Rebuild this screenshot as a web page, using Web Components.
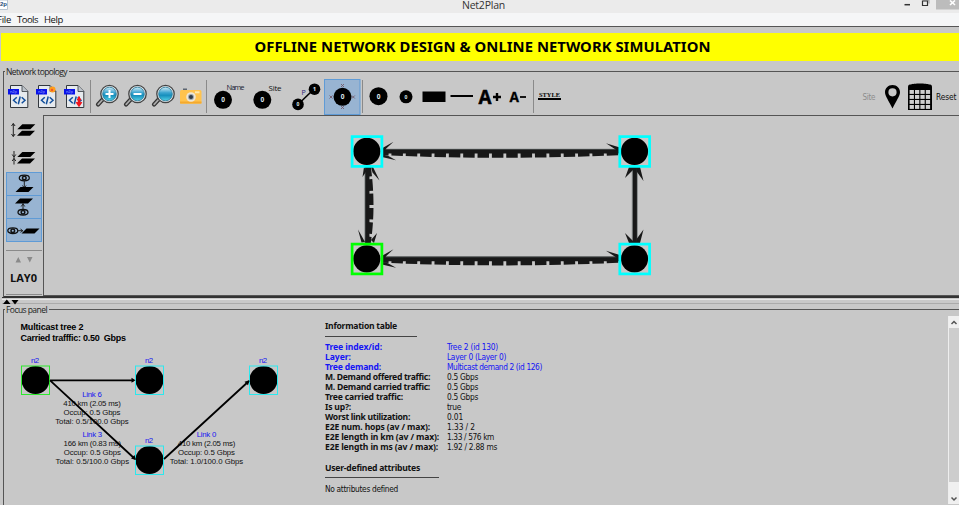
<!DOCTYPE html>
<html lang="en"><head><meta charset="utf-8"><title>Net2Plan</title>
<style>
html,body{margin:0;width:959px;height:505px;overflow:hidden;background:#c8c8c8}
</style></head><body>
<net-app></net-app>
<script>
const TAHOMA = '"DejaVu Sans Condensed","DejaVu Sans",sans-serif';
const SEGOE = '"Open Sans","Noto Sans",sans-serif';
const define = (name, html, init) => customElements.define(name, class extends HTMLElement {
  connectedCallback() {
    if (this.shadowRoot) return;
    const root = this.attachShadow({mode: 'open'});
    const t = document.createElement('template');
    t.innerHTML = typeof html === 'function' ? html(this) : html;
    root.append(t.content.cloneNode(true));
    if (init) init(this, root);
  }
});
// Text whose tracking is adjusted so that it spans the width given in "w".
define('fit-text', '<style>:host{display:block;white-space:pre;flex:none}</style><span><slot></slot></span>', (el, root) => {
  const w = +el.getAttribute('w');
  if (!w) return;
  el.style.width = w + 'px';
  const span = root.querySelector('span');
  const nat = span.getBoundingClientRect().width;
  span.style.letterSpacing = ((w - nat) / el.textContent.length) + 'px';
});
define('title-bar', `<style>
:host{display:flex;height:13px;background:#ebebeb;font:10.500px/10px ${SEGOE};color:#333;overflow:hidden;flex:none}
.mid{width:453px;flex:none}
svg{display:block;margin-left:auto}
</style><svg width="9" height="13" style="margin:0"><path d="M0 0H7.5V9.5H0" fill="#fff" stroke="#b8c4d0" stroke-width="1"/><text x="0" y="6" font-family="Liberation Sans" font-weight="bold" font-size="6" fill="#234a78" textLength="7">2p</text></svg>
<div class="mid"></div><fit-text w="43">Net2Plan</fit-text>
<svg width="64" height="13" viewBox="895 0 64 13"><path d="M936 0H959V9.500H936Z" fill="#bcbcbc"/><path d="M904.500 4.700H910" stroke="#333" stroke-width="1.500"/><path d="M923 0H929V3.500" stroke="#999" fill="none"/><path d="M922.500 1H927.500V5.500H922.500Z" fill="none" stroke="#333" stroke-width="1.200"/><path d="M950 .5l5 4.500M955 .5l-5 4.500" stroke="#fff" stroke-width="1.600"/></svg>`);
define('menu-bar', `<style>
:host{display:flex;height:14px;background:#f5f6f7;border-bottom:1px solid #555;font:9.500px/13px ${SEGOE};color:#111;gap:6px;flex:none;box-sizing:border-box}
.f{margin-left:-3px}
</style><fit-text class="f" w="14">File</fit-text><fit-text w="21">Tools</fit-text><fit-text w="19">Help</fit-text>`);
define('yellow-banner', `<style>
:host{display:flex;height:28px;margin:6px 0 0 1px;background:#ff0;justify-content:center;align-items:center;font:bold 14.800px/26px "Noto Sans","Open Sans",sans-serif;color:#000;flex:none;padding-left:0}
fit-text{margin:-2px 0 0 5px}
</style><fit-text w="456">OFFLINE NETWORK DESIGN &amp; ONLINE NETWORK SIMULATION</fit-text>`);
// Titled frame that runs past the right window edge.
define('group-box', el => `<style>
:host{display:flex;flex-direction:column;box-sizing:border-box;flex:none;margin-left:3px}
.head{display:flex;height:8px;align-items:center;flex:none;font:8.500px/8px ${SEGOE};color:#222}
.head fit-text{margin-top:1px}
.head i{height:1px;background:#555;width:2px;margin-right:1px}
.head i:last-child{flex:1;margin:0 0 0 2px}
.body{flex:1;border-left:1px solid #555;margin-top:-4px;padding-top:3px;display:flex;flex-direction:column;min-height:0}
</style><div class="head"><i></i><fit-text w="${el.getAttribute('lw')}">${el.getAttribute('label')}</fit-text><i></i></div><div class="body"><slot></slot></div>`);
define('tool-cell', el => { const w = el.getAttribute('w'), x = el.getAttribute('x'); return `<style>
:host{display:block;flex:none;width:${w}px;height:37px}
svg{display:block}text{font-family:${SEGOE}}.t{font-family:${TAHOMA}}
</style><svg width="${w}" height="37" viewBox="${x} 78 ${w} 37">${ICONS[el.getAttribute('icon')] || ''}</svg>`; });
define('side-cell', el => { const h = el.getAttribute('h'), y = el.getAttribute('y'); return `<style>
:host{display:block;flex:none;width:37px;height:${h}px}svg{display:block}
</style><svg width="37" height="${h}" viewBox="5 ${y} 37 ${h}">${ICONS[el.getAttribute('icon')] || ''}</svg>`; });

const file = (x, extra) => `<path d="M${x+2.5} 85.500H${x+14}L${x+19.800} 91.300V107.500H${x+2.500}Z" fill="#e6eaee" stroke="#33383e" stroke-width="1"/><path d="M${x+14} 85.500V91.500H${x+19.800}" fill="#bdc3ca" stroke="#33383e" stroke-width=".8"/><rect x="${x}" y="89" width="11" height="5.500" fill="#0a14e8"/><text x="${x+2}" y="93.200" font-size="4" fill="#a9b4ff" textLength="7">n2p</text><path d="M${x+8.800} 97.300l-3.300 3l3.300 3M${x+13.700} 97.300l3.300 3l-3.300 3M${x+12.200} 96.500l-1.900 7.700" fill="none" stroke="#124f9c" stroke-width="1.500"/>${extra || ''}`;
const lens = (x, sign) => `<path d="M${x+9} 98L${x+3} 104.500" stroke="#333" stroke-width="4.200" stroke-linecap="round"/><path d="M${x+9} 98L${x+3.200} 104.300" stroke="#aaa" stroke-width="1.800" stroke-linecap="round"/><circle cx="${x+14.500}" cy="94" r="8.700" fill="#e0e7ec" stroke="#444" stroke-width="1.300"/><circle cx="${x+14.500}" cy="94" r="6.800" fill="url(#g)" stroke="#247897" stroke-width=".8"/>${sign === '+' ? `<path d="M${x+14.500} 90v8M${x+10.500} 94h8" stroke="#fff" stroke-width="2"/>` : sign ? `<path d="M${x+10.500} 94h8" stroke="#fff" stroke-width="2"/>` : ''}`;
const grad = '<defs><linearGradient id="g" x2="0" y2="1"><stop stop-color="#d5eef7"/><stop offset=".4" stop-color="#3da5d0"/><stop offset=".6" stop-color="#168fbd"/><stop offset="1" stop-color="#55d2e5"/></linearGradient></defs>';
const node = (x, y, r, t, f) => `<circle cx="${x}" cy="${y}" r="${r}"/><text x="${x}" y="${y + f*.36}" font-size="${f}" font-weight="bold" text-anchor="middle" fill="#dde6ee">${t}</text>`;
const sep = x => `<path d="M${x+.5} 80V113" stroke="#8a8a8a"/>`;
const par = (x, y) => `<path d="M${x+5} ${y}H${x+18}L${x+13} ${y+5}H${x}Z"/>`;
const eye = (x, y) => `<ellipse cx="${x}" cy="${y}" rx="5" ry="2.800" fill="none" stroke="#111" stroke-width="1.300"/><circle cx="${x}" cy="${y}" r="1.800" fill="none" stroke="#111" stroke-width="1.500"/>`;
const sel = (y, h) => `<rect x="6.500" y="${y+.5}" width="35" height="${h-1}" fill="#98b4d2" stroke="#5f9bd6"/>`;
const ICONS = {
  file1: file(8), file2: file(36, '<circle cx="52.500" cy="89.500" r="3" fill="#ff9d1c"/><circle cx="52" cy="90" r="1.200" fill="#f0562e"/>'),
  file3: file(64, '<path d="M79 96.500V104M76.500 102l2.500 3.500l2.500-3.500M77 99.500h4" stroke="#f0141c" stroke-width="2" fill="none"/>') + sep(90),
  zin: grad + lens(95, '+'), zout: grad + lens(123, '-'), zall: grad + lens(151, ''),
  cam: '<rect x="183" y="88.500" width="4" height="2" fill="#5b6470"/><rect x="180" y="90" width="21.500" height="13.800" rx="1.500" fill="#ffc34e"/><path d="M180 102.500H201.500" stroke="#f4a92e" stroke-width="2"/><rect x="195" y="91.300" width="4.500" height="2" fill="#ffe9ac"/><circle cx="191" cy="97" r="4.800" fill="#eee5d4"/><circle cx="191" cy="97" r="3" fill="#9aa4ae"/><circle cx="191" cy="97" r="2" fill="#303a45"/>' + sep(206),
  name: node(223, 99.800, 9, '0', 6.5) + '<text x="226.500" y="89.500" font-size="7.500" fill="#223" textLength="18">Name</text>',
  site: node(262.300, 99.800, 9, '0', 6.5) + '<text x="268.500" y="91" font-size="8" fill="#111" textLength="13">Site</text>',
  link: '<path d="M298 104.500L314 89" stroke="#000" stroke-width="1.600"/>' + node(298, 104.400, 5.800, '0', 5) + node(314.500, 89.200, 5.800, '1', 6) + '<text x="301.500" y="95" font-size="7" fill="#227">P</text>',
  cross: '<rect x="324.500" y="79.500" width="35.500" height="35" fill="#98b4d2" stroke="#5f9bd6"/>' + node(342.500, 96.800, 9, '0', 6.5) + '<path d="M341 84l3 3m0-3l-3 3M341 106l3 3m0-3l-3 3M329.500 95.500l3 3m0-3l-3 3M351.800 95.500l3 3m0-3l-3 3" stroke="#745b6b" stroke-width=".9"/>' + sep(362),
  big: node(378.500, 96.200, 9, '0', 6.5), small: node(406, 96.800, 6.500, '0', 5),
  rect: '<rect x="422.500" y="91.500" width="23" height="10.500"/>', line: '<rect x="450.500" y="95" width="22.500" height="2"/>',
  ap: '<g stroke="#000"><text x="478.500" y="103.500" font-size="20" font-weight="bold" stroke-width=".5" textLength="13" lengthAdjust="spacingAndGlyphs">A</text><path d="M493 97h8M497 93v8" stroke-width="2.400"/></g>',
  am: '<text x="509.500" y="101.800" font-size="14.500" font-weight="bold" stroke="#000" stroke-width=".3" textLength="9.500" lengthAdjust="spacingAndGlyphs">A</text><path d="M520 97h6" stroke="#000" stroke-width="1.800"/>' + sep(533),
  style: '<text x="539" y="96.800" font-size="6.500" font-weight="bold" style="font-family:Liberation Serif" textLength="21" lengthAdjust="spacingAndGlyphs">STYLE</text><rect x="538" y="98" width="23" height="2"/>',
  sitel: '<text class="t" x="862.500" y="99.500" font-size="8" fill="#8c8c8c" textLength="13">Site</text>',
  pin: '<path fill-rule="evenodd" d="M892.500 85c-4.500 0-7.500 3.300-7.500 7.300c0 3.700 3.800 8.500 7.500 16.200c3.700-7.700 7.500-12.500 7.500-16.200c0-4-3-7.300-7.500-7.300m0 3.200a4.100 4.100 0 1 1 0 8.200a4.100 4.100 0 1 1 0-8.200"/>',
  cal: '<path d="M908 87c0-2 1-2.500 3-2.500c2-1.300 16-1.300 18 0c2 0 3 .5 3 2.500V110H908Z"/><g fill="#d0d0d0">' + [0,1,2,3].map(r => [0,1,2,3].map(c => `<rect x="${909.600+c*5.400}" y="${90+r*5}" width="4.300" height="3.900"/>`).join('')).join('') + '</g>',
  reset: '<text class="t" x="936" y="99.700" font-size="8.300" fill="#111" textLength="20.500">Reset</text>',
  s1: '<path d="M13.300 123.500V136.500M11.500 126l1.800-2.500l1.800 2.500M11.500 134l1.800 2.500l1.800-2.500" stroke="#222" fill="none"/>' + par(17.300,124.200) + par(17,130.800),
  s2: '<path d="M14 151V164.500M12.200 154.500l1.800 2.500l1.800-2.500M12.200 161l1.800-2.500l1.800 2.500" stroke="#222" fill="none"/>' + par(17.300,152) + par(17,158.500),
  s3: sel(172,24) + eye(24.300,178) + '<path d="M24.300 181V188M22.500 185.500l1.800 2.500l1.800-2.500" stroke="#222" fill="none"/>' + par(15.500,187),
  s4: sel(195,24) + par(15,198.500) + '<path d="M23 203V210M21.200 206.500l1.800-2.500l1.800 2.500" stroke="#222" fill="none"/>' + eye(23,212.300),
  s5: sel(218,24) + eye(12.800,230.700) + '<path d="M18 230.700h5M20.500 229l2.300 1.700l-2.300 1.700" stroke="#222" fill="none"/>' + par(21.500,228.500),
  s6: '<path d="M6 250.500H42M6 294.500H42" stroke="#8a8a8a"/><path d="M15.500 262.500h5.500l-2.700-5.500zM27 257h5.500l-2.700 5.500z" fill="#8a8a8a"/><text x="10" y="282" font-family="Open Sans,Noto Sans" font-size="11" font-weight="bold" fill="#111" textLength="27" lengthAdjust="spacingAndGlyphs">LAY0</text>'
};
define('tool-bar', () => { const c = [['file1',7,26],['file2',33,28],['file3',61,33],['zin',94,28],['zout',122,28],['zall',150,28],['cam',178,31],['name',209,41],['site',250,38],['link',288,35],['cross',323,42],['big',365,31],['small',396,22],['rect',418,30],['line',448,28],['ap',476,30],['am',506,30],['style',536,30]];
 const r = [['sitel',860,22],['pin',882,22],['cal',904,30],['reset',934,25]];
 const f = a => a.map(([i,x,w]) => `<tool-cell icon="${i}" x="${x}" w="${w}"></tool-cell>`).join('');
 return `<style>:host{display:flex;height:37px;flex:none;padding-left:3px}.gap{flex:1}</style>${f(c)}<div class="gap"></div>${f(r)}`; });
define('layer-bar', () => `<style>:host{display:flex;flex-direction:column;width:37px;flex:none;margin:1px 1px 0 1px}</style>` +
 [['s1',116,28],['s2',144,28],['s3',172,23],['s4',195,23],['s5',218,25],['s6',243,52]].map(([i,y,h]) => `<side-cell icon="${i}" y="${y}" h="${h}"></side-cell>`).join(''));
define('topology-canvas', () => {
 const box = (x, y, c) => `<circle cx="${x}" cy="${y}" r="13.600"/><rect x="${x-14.700}" y="${y-14.700}" width="29.800" height="29.800" fill="none" stroke="${c}" stroke-width="2.700"/>`;
 const h = y => `<path d="M383 ${y-1.400}H619" stroke="#181818" stroke-width="4.600"/><path d="M383 ${y-.3}Q500 ${y+5} 619 ${y-.3}" fill="none" stroke="#181818" stroke-width="5.500" stroke-dasharray="11.500 2.850" stroke-dashoffset="-8.500"/><path d="M383 ${y-3.500}H619" stroke="#687070" stroke-width=".7"/>
 <path d="M383 ${y-5}L393.500 ${y-11}L386.500 ${y-4.500}L383 ${y}ZM383 ${y+2}L388 ${y+3}L396 ${y+7.500}L383 ${y+4.500}ZM619 ${y-5.500}L606 ${y-9.500}L616 ${y-3}L619 ${y}Z" fill="#181818"/>`;
 return `<style>:host{display:block;flex:1;border:solid #555;border-width:1px 0 1px 1px;min-width:0;box-sizing:border-box}svg{display:block}</style>
 <svg width="915" height="179" viewBox="44 116 915 179">${h(152.700)}${h(260.300)}
 <path d="M367.200 167V243" stroke="#181818" stroke-width="4.500"/><path d="M365 167V243" stroke="#687070" stroke-width=".7"/><path d="M368 166Q373.500 206 368 243" fill="none" stroke="#181818" stroke-width="5.500" stroke-dasharray="11.500 2.850" stroke-dashoffset="1"/>
 <path d="M364 167l-1.500 10l4-6zM371 167h2l6.500 13.500l-7-8zM365 242l-7-12.500l3.500 13zM371 240l6-7l-3 10z" fill="#181818"/>
 <path d="M634.800 167V243" stroke="#181818" stroke-width="4.500"/><path d="M632.300 167V243M637.300 167V243" stroke="#687070" stroke-width=".7"/>
 <path d="M629 167h4v3l-8 8zM636 167h4l3.500 14l-6.500-9zM629 243h4v-2l-8-8zM636 243h4l3.500-13.500l-6.500 9z" fill="#181818"/>
 ${box(366.800,151.300,'#0ff')}${box(634.500,151.300,'#0ff')}${box(366.800,258.800,'#0f0')}${box(634.500,258.800,'#0ff')}</svg>`; });
define('split-handle', `<style>:host{display:block;flex:none;height:8px;margin-left:2px;background:#c8c8c8;border-top:1px solid #333;box-sizing:border-box}svg{display:block}</style>
<svg width="957" height="7" viewBox="2 298 957 7"><path d="M2 299.500H959" stroke="#e9e9e9"/><path d="M2 303.500H959" stroke="#aaa"/><path d="M3 304h7.500l-3.700-4.500zM11.500 300h7l-3.500 4.500z"/></svg>`);
define('tree-view', () => {
 const n = (x, y, c) => `<text x="${x-.5}" y="${y-17.500}" text-anchor="middle" fill="#1414f0" textLength="8">n2</text><circle cx="${x}" cy="${y}" r="14"/><rect x="${x-14}" y="${y-14}" width="28" height="28.500" fill="none" stroke="${c}"/>`;
 const l = (x, y, a, b, t) => [[a,19.500],[b,57.500],['Occup: 0.5 Gbps',57],[`Total: ${t}/100.0 Gbps`,73.500]].map(([s,w],i) => `<text x="${x-w/2}" y="${y+i*9.300}" fill="${i?'#111':'#1414f0'}" textLength="${w}">${s}</text>`).join('');
 return `<style>:host{display:block;flex:none;width:316px}svg{display:block}text{font-family:"Liberation Sans",Arial,sans-serif;font-size:7.800px}text.b{font-weight:bold;font-size:9px}</style>
 <svg width="316" height="193" viewBox="4 312 316 193"><text class="b" x="20.500" y="330" textLength="63">Multicast tree 2</text><text class="b" x="20.500" y="340.800" xml:space="preserve" textLength="105.500">Carried trafffic: 0.50  Gbps</text>
 ${l(92,396.500,'Link 6','410 km (2.05 ms)','0.5')}${l(92.300,436.500,'Link 3','166 km (0.83 ms)','0.5')}${l(206.500,436.500,'Link 0','410 km (2.05 ms)','1.0')}
 ${n(35.500,380,'#2ee82e')}${n(149.500,380,'#2be8ee')}${n(263.500,380,'#2be8ee')}${n(149.500,460,'#2be8ee')}
 <path d="M50 380.300H134M50 380.300L135 459M164 459L249 381" stroke="#000" stroke-width="1.800"/><path d="M135.500 380.300l-4-2.500v5zM136 460l-5-1.500l3.500-3.500zM249.500 380.300l-1.500 5l-3.500-3.500z"/></svg>`; });
define('info-row', el => `<style>:host{display:flex;height:10px;flex:none}.k{width:122px;flex:none;font:bold 8.600px/10px "Noto Sans",sans-serif}:host([hot]){color:#1414f5}</style><div class="k"><fit-text w="${el.getAttribute('kw')}">${el.getAttribute('k')}</fit-text></div><fit-text w="${el.getAttribute('vw')}">${el.getAttribute('v')}</fit-text>`);
define('info-table', () => { const rows = [['Tree index/id:',57,'Tree 2 (id 130)',51,1],['Layer:',26,'Layer 0 (Layer 0)',59,1],['Tree demand:',56,'Multicast demand 2 (id 126)',95,1],['M. Demand offered traffic:',105,'0.5 Gbps',31],['M. Demand carried traffic:',105,'0.5 Gbps',31],['Tree carried traffic:',78,'0.5 Gbps',31],['Is up?:',26,'true',14],['Worst link utilization:',85,'0.01',16],['E2E num. hops (av / max):',105,'1.33 / 2',28],['E2E length in km (av / max):',114,'1.33 / 576 km',47],['E2E length in ms (av / max):',113,'1.92 / 2.88 ms',50]];
 return `<style>:host{display:flex;flex-direction:column;flex:1;padding:9px 0 0 5px;font:8.300px/10px "DejaVu Sans Condensed","DejaVu Sans",sans-serif;color:#111}.h{font:bold 8.600px/10px "Noto Sans",sans-serif;height:10px}.r{height:1px;background:#444;flex:none}</style>
 <fit-text class="h" w="72">Information table</fit-text><div class="r" style="width:92px;margin:5px 0 5px"></div>
 ${rows.map(([k,a,v,b,h]) => `<info-row ${h?'hot':''} k="${k}" kw="${a}" v="${v}" vw="${b}"></info-row>`).join('')}
 <fit-text class="h" w="95" style="margin-top:11px">User-defined attributes</fit-text><div class="r" style="width:114px;margin:4px 0 6px"></div><fit-text w="73">No attributes defined</fit-text>`; });
define('scroll-bar', `<style>:host{display:flex;flex-direction:column;width:11px;flex:none;margin-top:4px;background:#cdcdcd;border-left:1px solid #eee;box-sizing:border-box;height:188px}.b{height:12px;background:#f0f0f0}.g{flex:1}.b:last-child{height:22px}svg{display:block}</style>
<div class="b"><svg width="10" height="12"><path d="M2.500 8l2.500-2.500l2.500 2.500" stroke="#555" stroke-width="1.500" fill="none"/></svg></div><div class="g"></div><div class="b"><svg width="10" height="22"><path d="M2.500 15.500l2.500 2.500l2.500-2.500" stroke="#555" stroke-width="1.500" fill="none"/></svg></div>`);
define('net-app', `<style>:host{display:flex;flex-direction:column;width:959px;height:505px;overflow:hidden;background:#c8c8c8}
.top{height:230px;margin-top:6px}.row{display:flex;flex:1;min-height:0}.focus{height:200px}.row.t{border-bottom:1px solid #333}</style>
<title-bar></title-bar><menu-bar></menu-bar><yellow-banner></yellow-banner>
<group-box class="top" label="Network topology" lw="61"><div style="height:4px;flex:none"></div><tool-bar></tool-bar><div class="row t"><layer-bar></layer-bar><topology-canvas></topology-canvas></div></group-box>
<split-handle></split-handle>
<group-box class="focus" label="Focus panel" lw="41"><div class="row"><tree-view></tree-view><info-table></info-table><scroll-bar></scroll-bar></div></group-box>`);
</script></body></html>
